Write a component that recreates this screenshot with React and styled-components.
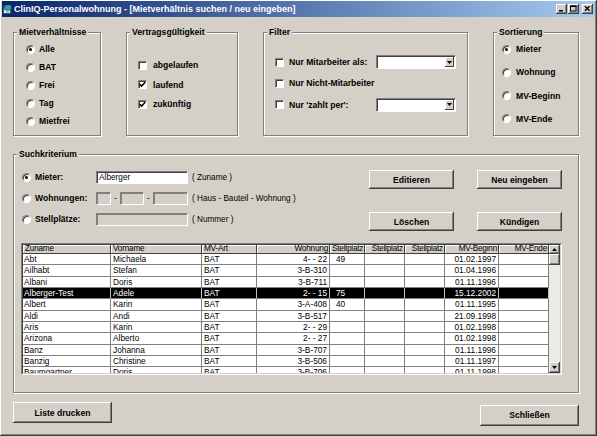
import React from 'react';
import styled, { createGlobalStyle, css } from 'styled-components';

const Global = createGlobalStyle`
  html, body { margin: 0; padding: 0; background: #D4D0C8; }
  body { font-family: "Liberation Sans", Arial, sans-serif; color: #000; }
  * { box-sizing: border-box; }
`;

const Window = styled.div`
  width: 597px;
  height: 436px;
  background: #D4D0C8;
  padding: 1px 2px 2px 2px;
  display: flex;
  flex-direction: column;
  box-shadow: inset -1px -1px 0 #404040, inset 1px 1px 0 #fff, inset -2px -2px 0 #808080;
`;

const TitleBar = styled.div`
  height: 16px;
  flex: none;
  display: flex;
  align-items: center;
  padding: 0 2px 0 1px;
  background: linear-gradient(to right, #0A246A, #A6CAF0);
  color: #fff;
  font-weight: bold;
  font-size: 9px;
  white-space: nowrap;
`;

const TitleText = styled.span`
  margin-left: 2px;
  flex: 1;
  line-height: 16px;
`;

const CaptionButtons = styled.div`
  display: flex;
  align-items: center;
  gap: 1px;
`;

const CaptionButton = styled.span`
  width: 11px;
  height: 10px;
  background: #D4D0C8;
  display: flex;
  align-items: center;
  justify-content: center;
  margin-left: ${p => p.$sep ? 2 : 0}px;
  box-shadow: inset -1px -1px 0 #404040, inset 1px 1px 0 #fff, inset -2px -2px 0 #808080;
`;

const Client = styled.div`
  flex: 1;
  display: flex;
  flex-direction: column;
  padding: 15px 16px 0 11px;
`;

const TopRow = styled.div`
  display: grid;
  grid-template-columns: 88px 112px 205px 86px;
  justify-content: space-between;
  height: 104px;
`;

const Group = styled.div`
  position: relative;
  border: 1px solid #808080;
  box-shadow: inset 1px 1px 0 #fff, 1px 1px 0 #fff;
  height: ${p => p.$h || 104}px;
  padding: ${p => p.$pad};
  display: flex;
  flex-direction: column;
  gap: ${p => p.$gap || 0}px;
`;

const Legend = styled.span`
  position: absolute;
  top: -6px;
  left: 3px;
  padding: 0 2px;
  background: #D4D0C8;
  font-weight: bold;
  font-size: 8.6px;
  line-height: 10px;
  white-space: nowrap;
`;

const Option = styled.div`
  display: flex;
  align-items: center;
  height: ${p => p.$h || 12}px;
  font-weight: bold;
  font-size: 8.6px;
  white-space: nowrap;
`;

const Radio = styled.span`
  flex: none;
  position: relative;
  width: 9px;
  height: 9px;
  border-radius: 50%;
  background: #fff;
  border: 1px solid;
  border-color: #808080 #fff #fff #808080;
  box-shadow: inset 1px 1px 0 #404040;
  margin-right: ${p => p.$gap}px;
  ${p => p.$checked && css`
    &::after {
      content: '';
      position: absolute;
      left: 2px;
      top: 2px;
      width: 3px;
      height: 3px;
      border-radius: 50%;
      background: #000;
    }
  `}
`;

const CheckBox = styled.span`
  flex: none;
  width: 9px;
  height: 9px;
  background: #fff;
  border: 1px solid;
  border-color: #808080 #fff #fff #808080;
  box-shadow: inset 1px 1px 0 #404040;
  margin-right: ${p => p.$gap}px;
  display: flex;
  align-items: center;
  justify-content: center;
`;

const FilterGrid = styled.div`
  display: grid;
  grid-template-columns: 101px 80px;
  grid-auto-rows: 14px;
  row-gap: 7.3px;
  align-items: center;
`;

const FullRow = styled.div`
  grid-column: 1 / -1;
`;

const Combo = styled.div`
  width: 80px;
  height: 14px;
  background: #fff;
  border: 1px solid;
  border-color: #808080 #fff #fff #808080;
  box-shadow: inset 1px 1px 0 #404040;
  padding: 1px 1px 1px 2px;
  display: flex;
  justify-content: flex-end;
`;

const ComboButton = styled.span`
  width: 9px;
  height: 100%;
  background: #D4D0C8;
  box-shadow: inset -1px -1px 0 #404040, inset 1px 1px 0 #fff;
  display: flex;
  align-items: center;
  justify-content: center;
`;

const SearchGroup = styled(Group)`
  margin-top: 18px;
  height: 239px;
  padding: 15px 0 0 0;
  gap: 0;
`;

const SearchTop = styled.div`
  display: flex;
  justify-content: space-between;
  align-items: flex-start;
  padding: 0 16px 0 8px;
`;

const SearchForm = styled.div`
  display: grid;
  grid-template-columns: 70px 92px auto;
  column-gap: 4px;
  row-gap: 7.2px;
  grid-auto-rows: 14px;
  align-items: center;
`;

const Field = styled.div`
  width: ${p => p.$w}px;
  height: 13px;
  background: ${p => p.$disabled ? '#D4D0C8' : '#fff'};
  border: 1px solid;
  border-color: #808080 #fff #fff #808080;
  box-shadow: inset 1px 1px 0 ${p => p.$disabled ? '#808080' : '#404040'};
  font-size: 8.3px;
  line-height: 11px;
  padding-left: 2px;
  white-space: nowrap;
`;

const FieldGroup = styled.div`
  display: flex;
  align-items: center;
`;

const Dash = styled.span`
  width: 9px;
  text-align: center;
  font-size: 8.3px;
`;

const Note = styled.span`
  font-size: 8.2px;
  white-space: nowrap;
`;

const ButtonGrid = styled.div`
  display: grid;
  grid-template-columns: 85px 85px;
  grid-auto-rows: 19px;
  column-gap: 23px;
  row-gap: 23px;
`;

const Button = styled.button`
  width: ${p => p.$w ? p.$w + 'px' : '100%'};
  height: ${p => p.$h || 19}px;
  margin: ${p => p.$mt || 0}px 0 0 0;
  padding: 0;
  background: #D4D0C8;
  border: none;
  box-shadow: inset -1px -1px 0 #404040, inset 1px 1px 0 #fff, inset -2px -2px 0 #808080;
  font-family: "Liberation Sans", Arial, sans-serif;
  font-weight: bold;
  font-size: 8.6px;
  color: #000;
`;

const TableOuter = styled.div`
  margin: 12px 0 0 7px;
  width: 541px;
  height: 132px;
  border: 1px solid;
  border-color: #808080 #fff #fff #808080;
`;

const TableInner = styled.div`
  height: 100%;
  border: 1px solid;
  border-color: #404040 #D4D0C8 #D4D0C8 #404040;
  background: #fff;
  display: flex;
  overflow: hidden;
`;

const Grid = styled.div`
  width: 526px;
  flex: none;
  overflow: hidden;
`;

const GridRow = styled.div`
  display: grid;
  grid-template-columns: ${p => p.$cols};
  height: ${p => p.$h}px;
  background: ${p => p.$selected ? '#000' : '#fff'};
  color: ${p => p.$selected ? '#fff' : '#000'};
`;

const HeadCell = styled.div`
  background: #D4D0C8;
  border-right: 1px solid #404040;
  border-bottom: 1px solid #404040;
  box-shadow: inset 1px 1px 0 #fff;
  font-size: 8.2px;
  letter-spacing: -0.2px;
  line-height: 8px;
  padding: 0 1px 0 2px;
  text-align: ${p => p.$align};
  white-space: nowrap;
  overflow: hidden;
`;

const Cell = styled.div`
  border-right: 1px solid ${p => p.$selected ? '#c0c0c0' : '#808080'};
  border-bottom: 1px solid #808080;
  font-size: 8.3px;
  line-height: 10.3px;
  padding: 0 2px 0 ${p => p.$pl}px;
  text-align: ${p => p.$align};
  white-space: nowrap;
  overflow: hidden;
`;

const ScrollBar = styled.div`
  width: 11px;
  flex: none;
  display: flex;
  flex-direction: column;
  background: #ECEAE6;
`;

const ScrollButton = styled.span`
  height: ${p => p.$h}px;
  flex: none;
  background: #D4D0C8;
  box-shadow: inset -1px -1px 0 #404040, inset 1px 1px 0 #fff, inset -2px -2px 0 #808080;
  display: flex;
  align-items: center;
  justify-content: center;
`;

const ScrollTrack = styled.div`
  flex: 1;
`;

const BottomRow = styled.div`
  margin-top: 9px;
  display: flex;
  justify-content: space-between;
  align-items: flex-start;
`;

const Check = () => (
  <svg width="7" height="7" viewBox="0 0 7 7">
    <polyline points="0.8,3.2 2.6,5 6.2,1.3" fill="none" stroke="#000" strokeWidth="1.6" />
  </svg>
);

const DownArrow = () => (
  <svg width="5" height="3" viewBox="0 0 5 3"><polygon points="0,0 5,0 2.5,3" fill="#000" /></svg>
);
const UpArrow = () => (
  <svg width="5" height="3" viewBox="0 0 5 3"><polygon points="0,3 5,3 2.5,0" fill="#000" /></svg>
);

const AppIcon = () => (
  <svg width="9" height="9" viewBox="0 0 9 9">
    <rect x="0.5" y="1.5" width="7" height="7" fill="#e8f4f4" stroke="#2a5a70" />
    <rect x="1" y="2" width="6" height="2" fill="#2a7a8a" />
    <rect x="2" y="0" width="6" height="5" fill="#40a0a8" stroke="#1e5a66" strokeWidth="0.8" />
    <rect x="3" y="5.5" width="3" height="2" fill="#7aa" />
  </svg>
);

const cols = [
  { label: 'Zuname', w: 88, align: 'left', h: 'left', pl: 1 },
  { label: 'Vorname', w: 91, align: 'left', h: 'left', pl: 2 },
  { label: 'MV-Art', w: 55, align: 'left', h: 'left', pl: 2 },
  { label: 'Wohnung', w: 73, align: 'right', h: 'right', pl: 2 },
  { label: 'Stellplatz', w: 35, align: 'left', h: 'right', pl: 6 },
  { label: 'Stellplatz', w: 40, align: 'left', h: 'right', pl: 2 },
  { label: 'Stellplatz', w: 40, align: 'left', h: 'right', pl: 2 },
  { label: 'MV-Beginn', w: 54, align: 'right', h: 'right', pl: 2 },
  { label: 'MV-Ende', w: 50, align: 'right', h: 'right', pl: 2 },
];
const colTemplate = cols.map(c => c.w + 'px').join(' ');

const rows = [
  ['Abt', 'Michaela', 'BAT', '4- - 22', '49', '', '', '01.02.1997', ''],
  ['Ailhabt', 'Stefan', 'BAT', '3-B-310', '', '', '', '01.04.1996', ''],
  ['Albani', 'Doris', 'BAT', '3-B-711', '', '', '', '01.11.1996', ''],
  ['Alberger-Test', 'Adele', 'BAT', '2- - 15', '75', '', '', '15.12.2002', ''],
  ['Albert', 'Karin', 'BAT', '3-A-408', '40', '', '', '01.11.1995', ''],
  ['Aldi', 'Andi', 'BAT', '3-B-517', '', '', '', '21.09.1998', ''],
  ['Aris', 'Karin', 'BAT', '2- - 29', '', '', '', '01.02.1998', ''],
  ['Arizona', 'Alberto', 'BAT', '2- - 27', '', '', '', '01.02.1998', ''],
  ['Banz', 'Johanna', 'BAT', '3-B-707', '', '', '', '01.11.1996', ''],
  ['Banzig', 'Christine', 'BAT', '3-B-506', '', '', '', '01.11.1997', ''],
  ['Baumgartner', 'Doris', 'BAT', '3-B-706', '', '', '', '01.11.1998', ''],
];

export default function App() {
  return (
    <>
      <Global />
      <Window>
        <TitleBar>
          <AppIcon />
          <TitleText>ClinIQ-Personalwohnung - [Mietverhältnis suchen / neu eingeben]</TitleText>
          <CaptionButtons>
            <CaptionButton>
              <svg width="11" height="10" viewBox="0 0 11 10"><rect x="3" y="6" width="4" height="1.5" fill="#000" /></svg>
            </CaptionButton>
            <CaptionButton>
              <svg width="11" height="10" viewBox="0 0 11 10"><rect x="2.5" y="2" width="5.5" height="5" fill="none" stroke="#000" strokeWidth="1" /><rect x="2" y="1.5" width="6.5" height="1.5" fill="#000" /></svg>
            </CaptionButton>
            <CaptionButton $sep>
              <svg width="11" height="10" viewBox="0 0 11 10"><path d="M3 2.2 L7.6 6.8 M7.6 2.2 L3 6.8" stroke="#000" strokeWidth="1.4" /></svg>
            </CaptionButton>
          </CaptionButtons>
        </TitleBar>
        <Client>
          <TopRow>
            <Group $pad="10px 0 0 12px" $gap={6}>
              <Legend>Mietverhältnisse</Legend>
              <Option><Radio $gap={4} $checked />Alle</Option>
              <Option><Radio $gap={4} />BAT</Option>
              <Option><Radio $gap={4} />Frei</Option>
              <Option><Radio $gap={4} />Tag</Option>
              <Option><Radio $gap={4} />Mietfrei</Option>
            </Group>
            <Group $pad="26px 0 0 11px" $gap={7.5}>
              <Legend>Vertragsgültigkeit</Legend>
              <Option><CheckBox $gap={6} />abgelaufen</Option>
              <Option><CheckBox $gap={6}><Check /></CheckBox>laufend</Option>
              <Option><CheckBox $gap={6}><Check /></CheckBox>zukünftig</Option>
            </Group>
            <Group $pad="22px 0 0 11px">
              <Legend>Filter</Legend>
              <FilterGrid>
                <Option $h={14}><CheckBox $gap={5} />Nur Mitarbeiter als:</Option>
                <Combo><ComboButton><DownArrow /></ComboButton></Combo>
                <FullRow><Option $h={14}><CheckBox $gap={5} />Nur Nicht-Mitarbeiter</Option></FullRow>
                <Option $h={14}><CheckBox $gap={5} />Nur 'zahlt per':</Option>
                <Combo><ComboButton><DownArrow /></ComboButton></Combo>
              </FilterGrid>
            </Group>
            <Group $pad="10px 0 0 8px" $gap={11.3}>
              <Legend>Sortierung</Legend>
              <Option><Radio $gap={5} $checked />Mieter</Option>
              <Option><Radio $gap={5} />Wohnung</Option>
              <Option><Radio $gap={5} />MV-Beginn</Option>
              <Option><Radio $gap={5} />MV-Ende</Option>
            </Group>
          </TopRow>

          <SearchGroup>
            <Legend>Suchkriterium</Legend>
            <SearchTop>
              <SearchForm>
                <Option $h={14}><Radio $gap={4} $checked />Mieter:</Option>
                <Field $w={92}>Alberger</Field>
                <Note>( Zuname )</Note>
                <Option $h={14}><Radio $gap={4} />Wohnungen:</Option>
                <FieldGroup>
                  <Field $w={15} $disabled />
                  <Dash>-</Dash>
                  <Field $w={24} $disabled />
                  <Dash>-</Dash>
                  <Field $w={35} $disabled />
                </FieldGroup>
                <Note>( Haus - Bauteil - Wohnung )</Note>
                <Option $h={14}><Radio $gap={4} />Stellplätze:</Option>
                <Field $w={92} $disabled />
                <Note>( Nummer )</Note>
              </SearchForm>
              <ButtonGrid>
                <Button>Editieren</Button>
                <Button>Neu eingeben</Button>
                <Button>Löschen</Button>
                <Button>Kündigen</Button>
              </ButtonGrid>
            </SearchTop>
            <TableOuter>
              <TableInner>
                <Grid>
                  <GridRow $cols={colTemplate} $h={9}>
                    {cols.map((c, i) => (
                      <HeadCell key={i} $align={c.h}>{c.label}</HeadCell>
                    ))}
                  </GridRow>
                  {rows.map((r, ri) => {
                    const sel = ri === 3;
                    return (
                      <GridRow key={ri} $cols={colTemplate} $h={11.33} $selected={sel}>
                        {r.map((v, ci) => (
                          <Cell key={ci} $align={cols[ci].align} $pl={cols[ci].pl} $selected={sel}>{v}</Cell>
                        ))}
                      </GridRow>
                    );
                  })}
                </Grid>
                <ScrollBar>
                  <ScrollButton $h={9}><UpArrow /></ScrollButton>
                  <ScrollButton $h={11} />
                  <ScrollTrack />
                  <ScrollButton $h={11}><DownArrow /></ScrollButton>
                </ScrollBar>
              </TableInner>
            </TableOuter>
          </SearchGroup>

          <BottomRow>
            <Button $w={99} $h={21}>Liste drucken</Button>
            <Button $w={99} $h={21} $mt={2.6}>Schließen</Button>
          </BottomRow>
        </Client>
      </Window>
    </>
  );
}
